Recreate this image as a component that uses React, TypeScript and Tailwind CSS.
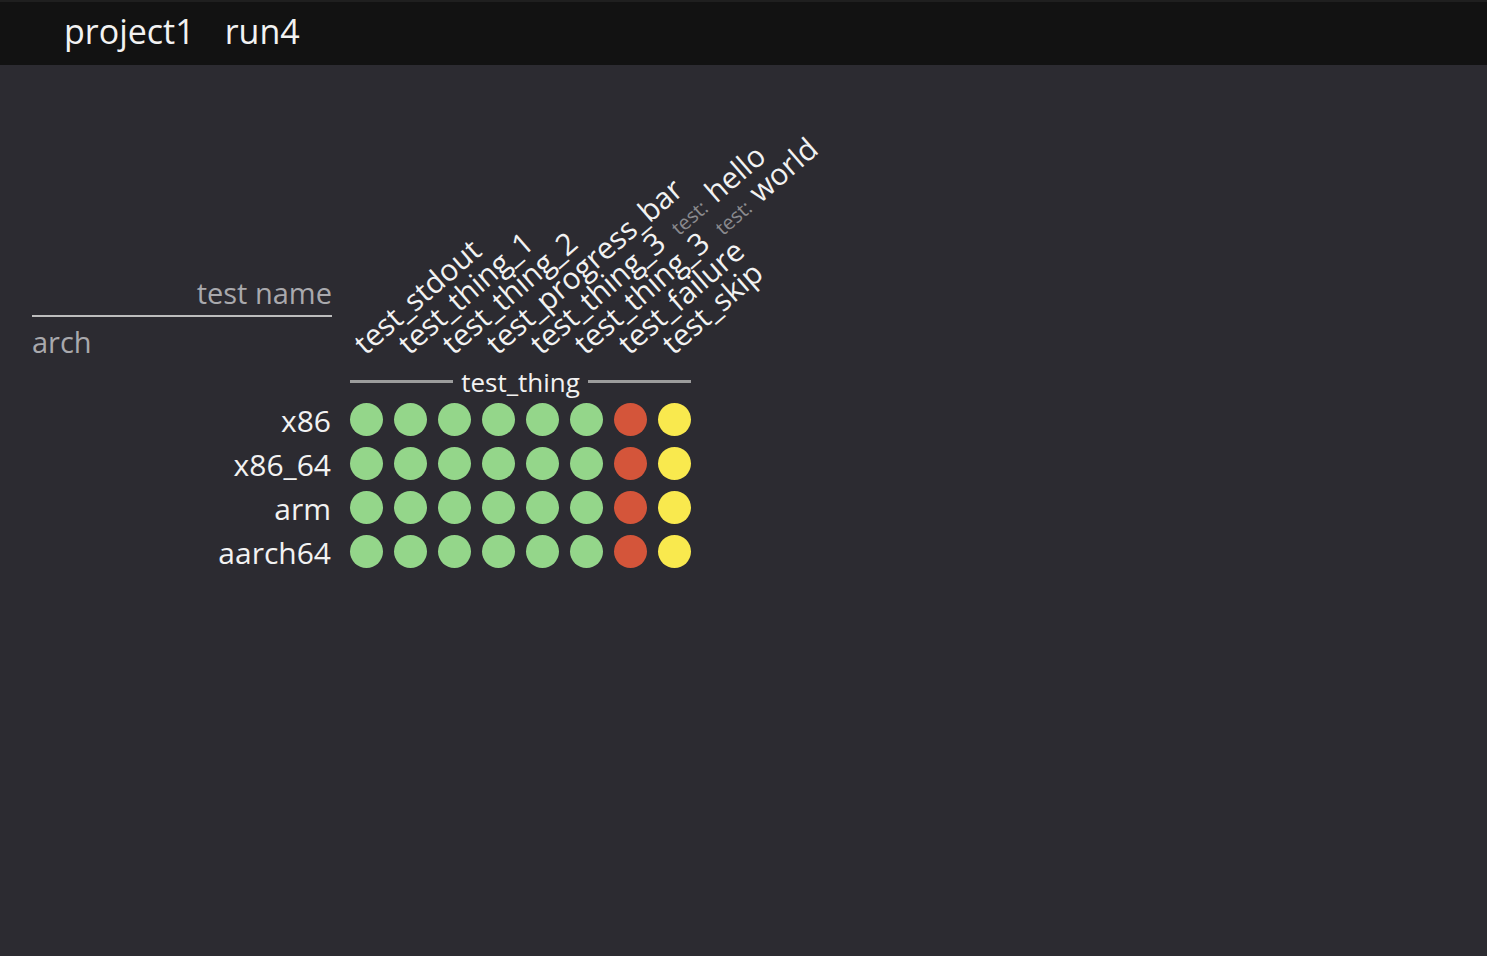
import React from "react";

type Status = "pass" | "fail" | "skip";

type Column = {
  name: string;
  extra?: string;
};

const COLUMNS: Column[] = [
  { name: "test_stdout" },
  { name: "test_thing_1" },
  { name: "test_thing_2" },
  { name: "test_progress_bar" },
  { name: "test_thing_3", extra: "hello" },
  { name: "test_thing_3", extra: "world" },
  { name: "test_failure" },
  { name: "test_skip" },
];

const ROW_RESULTS: Status[] = ["pass", "pass", "pass", "pass", "pass", "pass", "fail", "skip"];

const ARCHES = ["x86", "x86_64", "arm", "aarch64"];

function dotUI(status: Status) {
  if (status === "fail") return "bg-[#d4553a]";
  if (status === "skip") return "bg-[#f9e94e]";
  return "bg-[#94d68a]";
}

export default function App() {
  return (
    <div
      className="min-h-[956px] bg-[#2c2b31] text-[#f2f2f2]"
      style={{ fontFamily: '"Open Sans", "Noto Sans", sans-serif' }}
    >
      <header className="flex h-[65px] items-center gap-[30px] border-t-2 border-[#1f1f1f] bg-[#121212] pb-[5px] pl-[64px] text-[34px]">
        <span>project1</span>
        <span>run4</span>
      </header>

      <main className="px-8 pt-[65px]">
        {/* column headers */}
        <div className="flex h-[240px]">
          <div className="flex w-[300px] flex-col justify-end pb-[10px] text-[29px] text-[#a9a9ad]">
            <div className="border-b-2 border-[#bdbdbd] pb-[4px] text-right leading-[36px]">
              test name
            </div>
            <div className="mt-[7px] leading-[36px]">arch</div>
          </div>
          <div className="ml-[18px] flex">
            {COLUMNS.map((col, i) => (
              <div key={i} className="relative h-full w-[44px]">
                <span className="absolute bottom-[11px] left-[18px] origin-bottom-left -rotate-[41deg] whitespace-nowrap text-[30px] leading-none">
                  {col.name}
                  {col.extra && (
                    <>
                      <span className="ml-[15px] text-[20px] text-[#8a8a8e]">test:</span>
                      <span className="ml-[9px]">{col.extra}</span>
                    </>
                  )}
                </span>
              </div>
            ))}
          </div>
        </div>

        {/* group header */}
        <div className="flex h-[27px]">
          <div className="w-[300px]" />
          <div className="ml-[18px] flex w-[341px] items-center gap-[8px]">
            <div className="mb-[5px] h-[3px] flex-1 bg-[#9c9c9c]" />
            <span className="mb-[4px] text-[26px] leading-none">test_thing</span>
            <div className="mb-[5px] h-[3px] flex-1 bg-[#9c9c9c]" />
          </div>
        </div>

        {/* rows */}
        {ARCHES.map((arch) => (
          <div key={arch} className="flex h-[44px] items-center">
            <div className="w-[299px] pt-[4px] text-right text-[30px] leading-none">{arch}</div>
            <div className="ml-[19px] flex gap-[11px]">
              {ROW_RESULTS.map((s, i) => (
                <div key={i} className={`h-[33px] w-[33px] rounded-full ${dotUI(s)}`} />
              ))}
            </div>
          </div>
        ))}
      </main>
    </div>
  );
}
